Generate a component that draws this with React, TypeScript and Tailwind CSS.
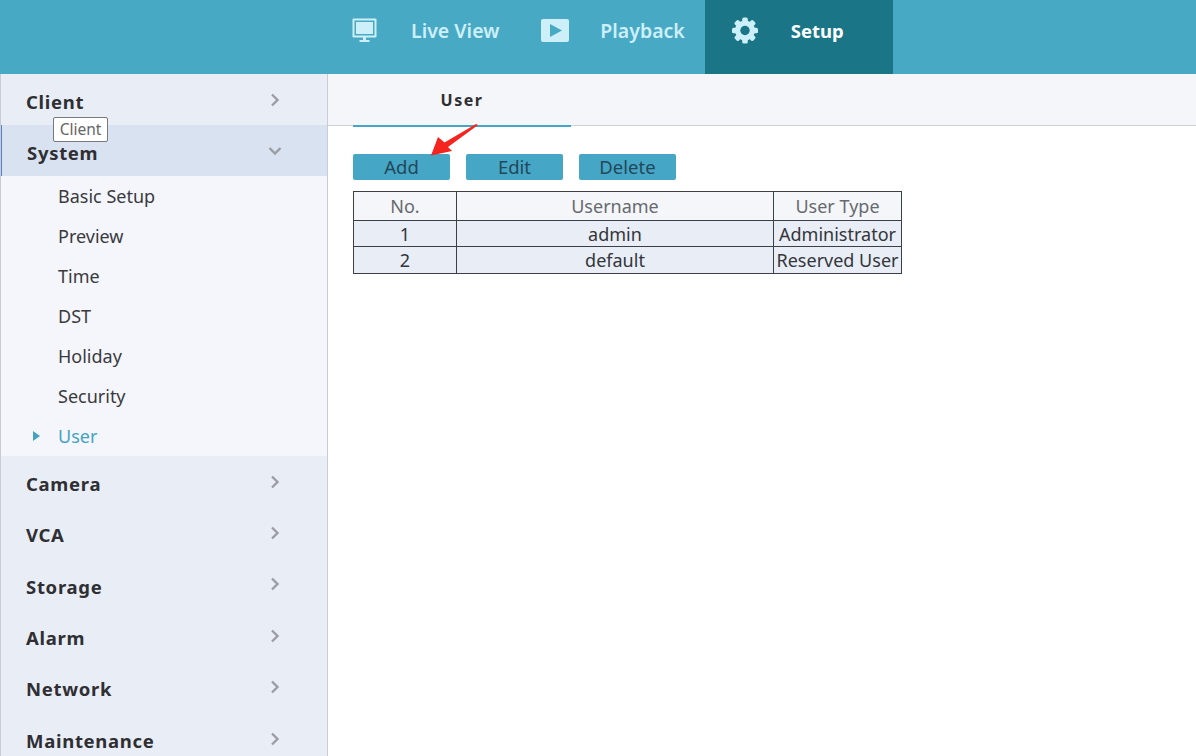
const font = "[font-family:'Noto_Sans','Open_Sans',sans-serif]"

function Chevron({ down }: { down?: boolean }) {
  return (
    <svg width="16" height="16" viewBox="0 0 16 16" fill="none" stroke="#9a9ea3" strokeWidth="2.4">
      {down ? <path d="M2.5 5 L8 10.5 L13.5 5" /> : <path d="M5 2.5 L10.5 8 L5 13.5" />}
    </svg>
  )
}

function MenuItem({ label, active, down, tall }: { label: string; active?: boolean; down?: boolean; tall?: boolean }) {
  return (
    <div className={`flex items-center justify-between pl-[25px] pr-[44px] ${tall ? 'h-[51.4px]' : 'h-[51px]'} ${active ? 'border-l border-[#5b7fd0] bg-[#d9e2f1]' : ''}`}>
      <span className="pt-[4px] text-[18.5px] font-bold tracking-[0.7px] text-[#2f2f33]">{label}</span>
      <Chevron down={down} />
    </div>
  )
}

function Button({ label }: { label: string }) {
  return (
    <button className="h-[26px] w-[97px] rounded-[2px] bg-[#45a6c5] text-[18.5px] leading-[26px] text-[#24475a]">
      {label}
    </button>
  )
}

const subItems = ['Basic Setup', 'Preview', 'Time', 'DST', 'Holiday', 'Security']
const bottomItems = ['Camera', 'VCA', 'Storage', 'Alarm', 'Network', 'Maintenance']
const gearTeeth = [0, 45, 90, 135, 180, 225, 270, 315]

const rows = [
  { no: '1', name: 'admin', type: 'Administrator', height: 'h-[26px]' },
  { no: '2', name: 'default', type: 'Reserved User', height: 'h-[27px]' },
]

export default function App() {
  return (
    <div className={`flex h-[756px] w-[1196px] flex-col overflow-hidden bg-white ${font}`}>
      <header className="flex h-[74px] shrink-0 bg-[#48a9c5] pl-[352px]">
        <div className="flex h-full items-center pb-[13px] text-[#cdeffa]">
          <svg width="25" height="25" viewBox="0 0 25 25" fill="#cdeffa">
            <path d="M1.5 0.5 H23.5 A1 1 0 0 1 24.5 1.5 V18.5 A1 1 0 0 1 23.5 19.5 H1.5 A1 1 0 0 1 0.5 18.5 V1.5 A1 1 0 0 1 1.5 0.5 Z M2.5 2.5 V17.5 H22.5 V2.5 Z" fillRule="evenodd" />
            <rect x="4" y="4" width="17" height="12" />
            <rect x="11" y="19" width="3" height="3.5" />
            <rect x="7.5" y="22" width="10" height="2" />
          </svg>
          <span className="ml-[34px] text-[19.5px] font-semibold">Live View</span>
          <svg className="ml-[42px]" width="28" height="23" viewBox="0 0 28 23">
            <rect width="28" height="23" rx="2" fill="#cdeffa" />
            <path d="M9 5 L21 11.5 L9 18 Z" fill="#48a9c5" />
          </svg>
          <span className="ml-[31px] text-[19.5px] font-semibold">Playback</span>
        </div>
        <div className="ml-[20px] flex h-full w-[188px] items-center bg-[#1a7686] pb-[13px] pl-[27px]">
          <svg width="26" height="27" viewBox="0 0 26 27" fill="#cdeffa">
            <circle cx="13" cy="13.5" r="10" />
            {gearTeeth.map((angle) => (
              <rect key={angle} x="10.2" y="0.5" width="5.6" height="6" rx="1.6" transform={`rotate(${angle} 13 13.5)`} />
            ))}
            <circle cx="13" cy="13.5" r="4.7" fill="#1a7686" />
          </svg>
          <span className="ml-[33px] text-[18.5px] font-bold text-white">Setup</span>
        </div>
      </header>

      <div className="flex min-h-0 flex-1">
        <aside className="relative w-[328px] shrink-0 border-x border-[#c9ccd2] bg-[#e9edf6]">
          <MenuItem label="Client" />
          <MenuItem label="System" active down />
          <div className="h-[280px] bg-[#f4f6fb]">
            {subItems.map((item) => (
              <div key={item} className="flex h-[40px] items-center pl-[57px] text-[18px] text-[#3a3a3e]">
                {item}
              </div>
            ))}
            <div className="flex h-[40px] items-center pl-[32px] text-[18px] text-[#45a3bf]">
              <svg className="mr-[18px]" width="7" height="10" viewBox="0 0 7 10" fill="#45a3bf">
                <path d="M0 0 L7 5 L0 10 Z" />
              </svg>
              User
            </div>
          </div>
          {bottomItems.map((item) => (
            <MenuItem key={item} label={item} tall />
          ))}
          <div className="absolute left-[52px] top-[43px] flex h-[25px] w-[55px] items-center justify-center rounded-[2px] border border-[#77797c] bg-white text-[15.5px] text-[#666]">
            Client
          </div>
        </aside>

        <main className="relative min-w-0 flex-1">
          <div className="h-[52px] border-b border-[#cfd2d6] bg-[#f4f6fa] pl-[25px]">
            <div className="flex h-[53px] w-[218px] items-center justify-center border-b-2 border-[#45a6c5] text-[16px] font-bold tracking-[1.5px] text-[#2f2f33]">
              User
            </div>
          </div>

          <div className="pl-[25px] pt-[28px]">
            <div className="flex gap-[16px]">
              <Button label="Add" />
              <Button label="Edit" />
              <Button label="Delete" />
            </div>

            <table className="mt-[11px] w-[549px] table-fixed border-collapse border border-[#3c3f44] text-center text-[18px] leading-[24px]">
              <thead>
                <tr className="h-[29px] bg-[#f5f6f9] text-[#666a70]">
                  <th className="w-[103px] border border-[#3c3f44] font-normal">No.</th>
                  <th className="w-[317px] border border-[#3c3f44] font-normal">Username</th>
                  <th className="border border-[#3c3f44] font-normal">User Type</th>
                </tr>
              </thead>
              <tbody>
                {rows.map((row) => (
                  <tr key={row.no} className={`${row.height} bg-[#e9edf6] text-[#33363a]`}>
                    <td className="border border-[#3c3f44] p-0">{row.no}</td>
                    <td className="border border-[#3c3f44] p-0">{row.name}</td>
                    <td className="whitespace-nowrap border border-[#3c3f44] p-0">{row.type}</td>
                  </tr>
                ))}
              </tbody>
            </table>
          </div>

          {/* red annotation arrow */}
          <svg className="absolute left-[100px] top-[50px]" width="54" height="34" viewBox="0 0 54 34" fill="#f5241f">
            <path d="M50 1 L20 23 L24 27 L3 31.5 L10 13 L16.5 18.5 L48 0 Z" />
          </svg>
        </main>
      </div>
    </div>
  )
}
